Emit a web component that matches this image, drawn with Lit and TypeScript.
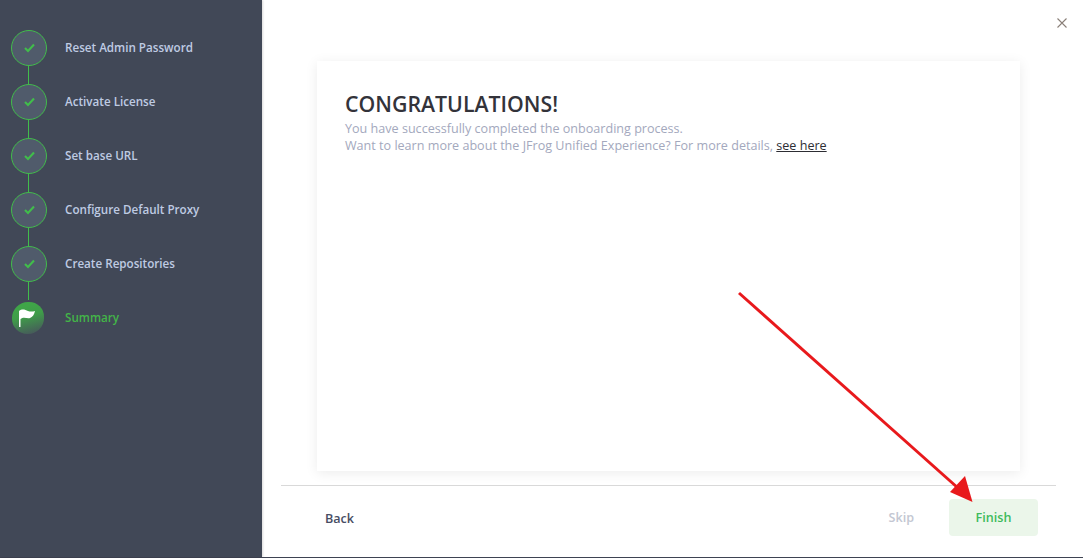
import { LitElement, html, css, svg } from "lit";
import { customElement } from "lit/decorators.js";

const steps = ["Reset Admin Password", "Activate License", "Set base URL", "Configure Default Proxy", "Create Repositories"];

@customElement("app-root")
export class AppRoot extends LitElement {
  static styles = css`
    :host { display: block; position: relative; width: 1083px; height: 558px; overflow: hidden; font-family: "Open Sans", sans-serif; background: #fff; }
    .page { display: flex; height: 557px; border-bottom: 1px solid #3e4352; }
    .side { width: 262px; flex: none; background: #414857; padding: 30px 0 0 11px; box-sizing: border-box; box-shadow: 1px 0 2px rgba(0,0,0,.15); }
    .step { display: flex; align-items: flex-start; height: 54px; }
    .node { width: 36px; height: 36px; flex: none; display: flex; flex-direction: column; align-items: flex-start; }
    .circle { width: 36px; height: 36px; flex: none; box-sizing: border-box; border-radius: 50%; border: 1px solid #41bd4b; background: #505b6b; display: flex; align-items: center; justify-content: center; }
    .line { width: 1px; height: 18px; flex: none; background: #41bd4b; margin-left: 17px; }
    .label { margin-left: 18px; font-size: 11.65px; font-weight: 600; line-height: 36px; color: #bfcbe3; white-space: nowrap; }
    .flag { width: 36px; height: 36px; display: flex; align-items: center; justify-content: flex-start; padding-left: 1px; box-sizing: border-box; }
    .blob { width: 32px; height: 32px; border-radius: 50% 46% 50% 48%; background: linear-gradient(165deg, #3fa548 18%, #3f9c49 45%, #465a5a 92%); display: flex; align-items: center; justify-content: flex-start; padding-left: 6px; box-sizing: border-box; }
    .current { color: #43b548; }
    .main { flex: 1; display: flex; flex-direction: column; min-width: 0; }
    .top { height: 61px; flex: none; display: flex; justify-content: flex-end; padding: 18px 16px 0 0; box-sizing: border-box; }
    .close { width: 10px; height: 10px; display: block; }
    .cardwrap { padding: 0 63px 0 55px; flex: none; }
    .card { height: 410px; box-sizing: border-box; background: #fff; box-shadow: 0 2px 12px rgba(0,0,0,.08); padding: 29px 28px; }
    h1 { margin: 0 0 2px; font-size: 21.3px; font-weight: 600; line-height: 28px; color: #33333a; }
    p { margin: 0; font-size: 12.58px; line-height: 17px; color: #a3a8bd; }
    a { color: #2d2d33; text-decoration: underline; }
    .footer { margin: 14px 27px 0 19px; border-top: 1px solid #d9d9d9; display: flex; align-items: center; height: 71px; box-sizing: border-box; padding: 0 18px 7px 44px; }
    .back { font-size: 12.6px; font-weight: 600; color: #474d63; padding-top: 1px; }
    .spacer { flex: 1; }
    .skip { font-size: 12.6px; font-weight: 600; color: #c3c7d2; margin-right: 35px; }
    .finish { width: 89px; height: 37px; border-radius: 4px; background: #ebf6ea; color: #3ebb5c; font-size: 12.6px; font-weight: 600; display: flex; align-items: center; justify-content: center; }
    .arrow { position: absolute; left: 0; top: 0; width: 1083px; height: 558px; pointer-events: none; }
  `;

  render() {
    const check = svg`<path d="M1 5 L4 8 L10 1.5" fill="none" stroke="#41bd4b" stroke-width="2.1"/>`;
    return html`
      <div class="page">
        <div class="side">
          ${steps.map(s => html`
            <div class="step">
              <div class="node">
                <div class="circle"><svg width="11" height="10" viewBox="0 0 11 10">${check}</svg></div>
                <div class="line"></div>
              </div>
              <div class="label">${s}</div>
            </div>`)}
          <div class="step">
            <div class="flag"><div class="blob">
              <svg width="18" height="20" viewBox="0 0 18 20"><path d="M1 19 L1 3 C4 0.5 7 1.5 10 3 C12.5 4 15 3.5 17 3 C16 7 14.5 9 12 10 C9 11 6 8 2.5 11 L2.5 19 Z" fill="#fff"/></svg>
            </div></div>
            <div class="label current">Summary</div>
          </div>
        </div>
        <div class="main">
          <div class="top">
            <svg class="close" viewBox="0 0 10 10"><path d="M.5.5 9.5 9.5M9.5.5.5 9.5" stroke="#8a7f78" stroke-width="1.1" fill="none"/></svg>
          </div>
          <div class="cardwrap"><div class="card">
            <h1>CONGRATULATIONS!</h1>
            <p>You have successfully completed the onboarding process.</p>
            <p>Want to learn more about the JFrog Unified Experience? For more details, <a>see here</a></p>
          </div></div>
          <div class="footer">
            <div class="back">Back</div>
            <div class="spacer"></div>
            <div class="skip">Skip</div>
            <div class="finish">Finish</div>
          </div>
        </div>
      </div>
      <svg class="arrow" viewBox="0 0 1083 558">
        <path d="M739 293 L958 488" stroke="#e8191c" stroke-width="3" fill="none"/>
        <path d="M972.5 502 L950 492 L965 476 Z" fill="#e8191c"/>
      </svg>`;
  }
}
